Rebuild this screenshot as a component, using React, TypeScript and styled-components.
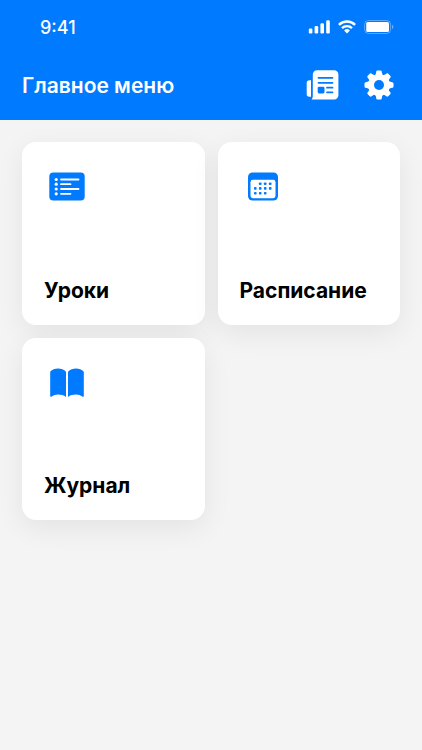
import React from "react";
import styled, { createGlobalStyle } from "styled-components";

const BLUE = "#007aff";

const GlobalStyle = createGlobalStyle`
  * { box-sizing: border-box; }
  body {
    margin: 0;
    background: #f4f4f4;
    font-family: Inter, "Liberation Sans", sans-serif;
  }
  svg { display: block; }
`;

const Screen = styled.div`
  min-height: 100vh;
  background: #f4f4f4;
`;

const Header = styled.header`
  background: ${BLUE};
  color: #fff;
`;

const StatusBar = styled.div`
  display: flex;
  align-items: center;
  justify-content: space-between;
  height: 54px;
  padding: 0 28px 0 40px;
`;

const Clock = styled.time`
  padding-top: 2px;
  font-size: 18px;
  font-weight: 500;
  line-height: 22px;
`;

const StatusIcons = styled.div`
  display: flex;
  align-items: center;
  gap: 8px;
`;

const TitleBar = styled.div`
  display: flex;
  align-items: center;
  justify-content: space-between;
  height: 66px;
  padding: 0 28px 4px 22px;
`;

const Title = styled.h1`
  margin: 0;
  padding-top: 2px;
  font-size: 21px;
  font-weight: 600;
  line-height: 28px;
`;

const Actions = styled.div`
  display: flex;
  align-items: center;
  gap: 25px;
`;

const IconButton = styled.button`
  padding: 0;
  border: 0;
  background: none;
  color: inherit;
  cursor: pointer;
`;

const Menu = styled.nav`
  display: grid;
  grid-template-columns: 1fr 1fr;
  gap: 13px;
  padding: 22px;
`;

const Card = styled.a`
  display: flex;
  flex-direction: column;
  justify-content: space-between;
  aspect-ratio: 1;
  padding: 25px 22px 20px;
  border-radius: 14px;
  background: #fff;
  color: #000;
  text-decoration: none;
  box-shadow: 0 8px 28px rgba(0, 0, 0, 0.07);
`;

const CardIcon = styled.span`
  display: flex;
  align-items: center;
  justify-content: center;
  width: 46px;
  height: 38px;
  color: ${BLUE};
`;

const CardLabel = styled.span`
  font-size: 21px;
  font-weight: 700;
  line-height: 28px;
`;

const SignalIcon = () => (
  <svg width="22" height="14" viewBox="0 0 22 14" fill="#fff" aria-hidden="true">
    <rect x="0.8" y="8.5" width="3.6" height="5" rx="1.2" />
    <rect x="6.6" y="6" width="3.6" height="7.5" rx="1.2" />
    <rect x="12.4" y="3.2" width="3.6" height="10.3" rx="1.2" />
    <rect x="18.2" y="0.3" width="3.6" height="13.2" rx="1.2" />
  </svg>
);

const WifiIcon = () => (
  <svg width="18" height="14" viewBox="0 0 18 14" aria-hidden="true">
    <g fill="none" stroke="#fff" strokeWidth="2.4">
      <path d="M0.9 4.9a11.5 11.5 0 0 1 16.2 0" />
      <path d="M4 8.2a7.1 7.1 0 0 1 10 0" />
    </g>
    <path d="M9 13.4 6.1 10.5a4.2 4.2 0 0 1 5.8 0z" fill="#fff" />
  </svg>
);

const BatteryIcon = () => (
  <svg width="30" height="14" viewBox="0 0 30 14" aria-hidden="true">
    <rect x="0.6" y="0.5" width="26" height="13" rx="4" fill="none" stroke="#fff" strokeOpacity="0.35" />
    <rect x="2.2" y="2" width="22.8" height="10" rx="1.6" fill="#fff" />
    <path d="M28 4.8v4.4a2.4 2.4 0 0 0 0-4.4z" fill="#fff" fillOpacity="0.4" />
  </svg>
);

const NewsIcon = () => (
  <svg width="33" height="30" viewBox="0 0 33 30" aria-hidden="true">
    <path d="M5 10.2v16.6H3.4A2.7 2.7 0 0 1 .7 24V13a2.8 2.8 0 0 1 2.8-2.8z" fill="#fff" />
    <path d="M11 .2h17.2a4.2 4.2 0 0 1 4.2 4.2v20.8a4.2 4.2 0 0 1-4.2 4.2H5.6c.8-.7 1.2-1.6 1.2-2.8v-22A4.2 4.2 0 0 1 11 .2z" fill="#fff" />
    <g stroke={BLUE} strokeWidth="1.8" strokeLinecap="round">
      <path d="M12.5 7.8h14M12.5 12.8h14M21 17.7h5.5M21 22.3h5.5" />
    </g>
    <rect x="11.7" y="16.7" width="6.8" height="6.7" rx="1.4" fill={BLUE} />
  </svg>
);

const GearIcon = () => (
  <svg width="30" height="30" viewBox="-15 -15 30 30" aria-hidden="true">
    <g fill="#fff">
      <circle r="10.8" />
      {[0, 45, 90, 135, 180, 225, 270, 315].map((angle) => (
        <path
          key={angle}
          transform={`rotate(${angle})`}
          d="M-4.4-9.6c.9-.7 1.4-1.5 1.5-2.6l.1-1c.1-.8.6-1.3 1.4-1.3h2.8c.8 0 1.3.5 1.4 1.3l.1 1c.1 1.1.6 1.9 1.5 2.6z"
        />
      ))}
    </g>
    <circle r="5" fill={BLUE} />
  </svg>
);

const LessonsIcon = () => (
  <svg width="36" height="29" viewBox="0 0 36 29" aria-hidden="true">
    <rect x="0.3" y="0.4" width="35.4" height="28.2" rx="4" fill="currentColor" />
    <g stroke="#fff" strokeWidth="1.8" strokeLinecap="round">
      <path d="M12 7.5h17.5M12 12.2h9.5M12 17h17.5M12 21.8h9.5" />
    </g>
    <g fill="#fff">
      {[7.5, 12.2, 17, 21.8].map((y) => (
        <circle key={y} cx="7.2" cy={y} r="1.6" />
      ))}
    </g>
  </svg>
);

const dots = [
  [12.2, 11.7], [17.2, 11.7], [22.2, 11.7],
  [7.3, 16.4], [12.2, 16.4], [17.2, 16.4], [22.2, 16.4],
  [7.3, 21.2], [12.2, 21.2], [17.2, 21.2],
];

const CalendarIcon = () => (
  <svg width="30" height="29" viewBox="0 0 30 29" aria-hidden="true">
    <rect x="0" y="0.4" width="30" height="28.2" rx="4.6" fill="currentColor" />
    <rect x="2.5" y="7.8" width="25" height="18.4" rx="2.4" fill="#fff" />
    <g fill="currentColor">
      {dots.map(([x, y]) => (
        <rect key={`${x}-${y}`} x={x - 1.3} y={y - 1.3} width="2.6" height="2.6" rx="0.8" />
      ))}
    </g>
  </svg>
);

const BookIcon = () => (
  <svg width="34" height="32" viewBox="0 -2 34 32" fill="currentColor" aria-hidden="true">
    <path d="M.2 3.7C2.2 1.6 5 .5 8 .5s6 1.1 8 3.2v25.2C13.8 27.4 11 26.6 8 26.6c-2.5 0-4.6.7-6.3 2-.7.5-1.5.2-1.5-.7z" />
    <path d="M33.8 3.7C31.8 1.6 29 .5 26 .5s-6 1.1-8 3.2v25.2c2.2-1.5 5-2.3 8-2.3 2.5 0 4.6.7 6.3 2 .7.5 1.5.2 1.5-.7z" />
  </svg>
);

const items = [
  { label: "Уроки", Icon: LessonsIcon },
  { label: "Расписание", Icon: CalendarIcon },
  { label: "Журнал", Icon: BookIcon },
];

export default function App() {
  return (
    <Screen>
      <GlobalStyle />
      <Header>
        <StatusBar>
          <Clock>9:41</Clock>
          <StatusIcons>
            <SignalIcon />
            <WifiIcon />
            <BatteryIcon />
          </StatusIcons>
        </StatusBar>
        <TitleBar>
          <Title>Главное меню</Title>
          <Actions>
            <IconButton type="button" aria-label="Новости">
              <NewsIcon />
            </IconButton>
            <IconButton type="button" aria-label="Настройки">
              <GearIcon />
            </IconButton>
          </Actions>
        </TitleBar>
      </Header>
      <Menu aria-label="Главное меню">
        {items.map(({ label, Icon }) => (
          <Card key={label} href="#">
            <CardIcon>
              <Icon />
            </CardIcon>
            <CardLabel>{label}</CardLabel>
          </Card>
        ))}
      </Menu>
    </Screen>
  );
}
